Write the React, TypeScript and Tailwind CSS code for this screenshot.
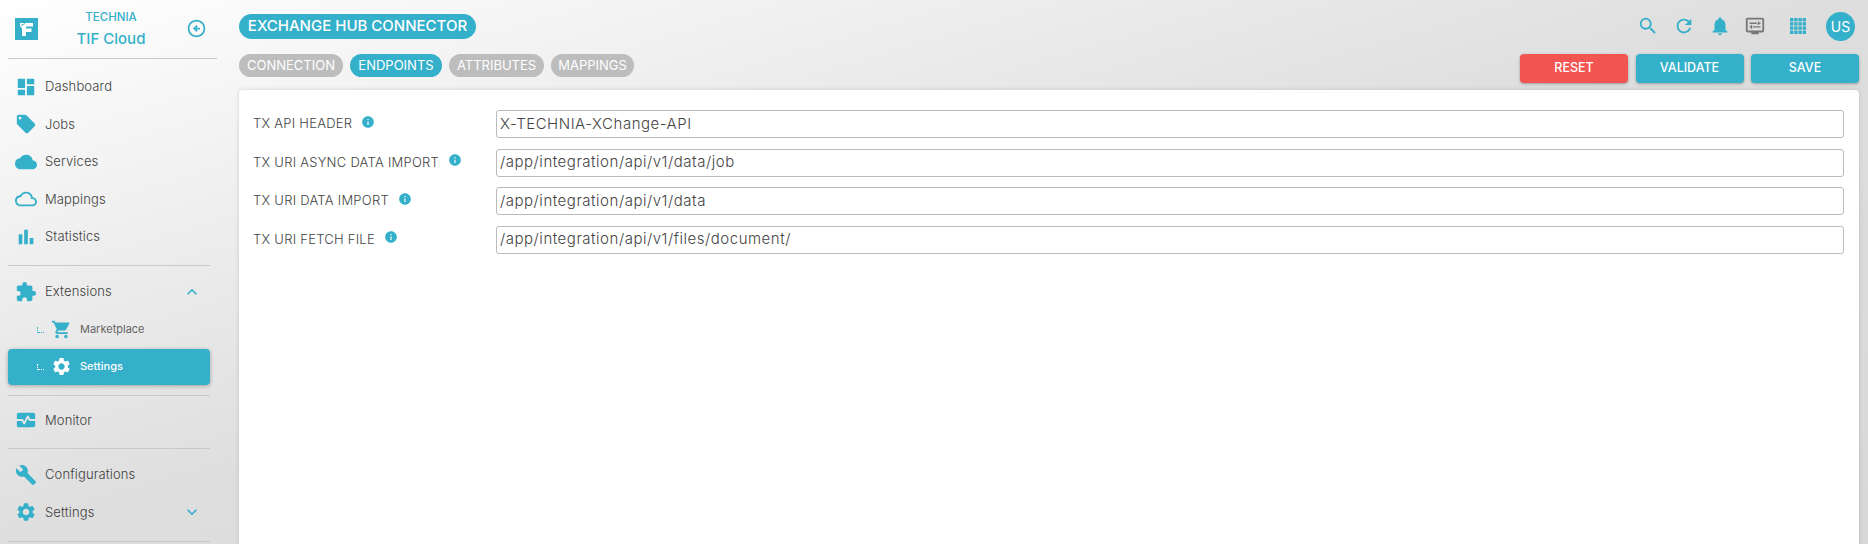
import React from 'react';
import {
  MdDashboard, MdLocalOffer, MdCloud, MdCloudQueue, MdBarChart, MdExtension, MdExpandLess, MdExpandMore,
  MdShoppingCart, MdSettings, MdMonitorHeart, MdBuild, MdSearch, MdRefresh, MdNotifications,
  MdOutlineDisplaySettings, MdInfo, MdOutlineArrowCircleLeft,
} from 'react-icons/md';

const font = "font-['Inter',sans-serif]";

const Logo = () => (
  <svg width="23" height="22" viewBox="0 0 23 22">
    <rect width="23" height="22" fill="#35b0ca" />
    <path d="M5 5h13v3.5h-7v2h5.5v3.5H11V18H7v-7.5L5 8z" fill="#fff" />
    <path d="M6 7.5l4-2" stroke="#35b0ca" strokeWidth="1" />
  </svg>
);

const Dots = ({ active }: { active?: boolean }) => (
  <div className={`flex flex-col justify-end h-[6px] w-[7px] border-l border-dotted ${active ? 'border-white' : 'border-[#35b0ca]'}`}>
    <div className={`w-[6px] border-b border-dotted ${active ? 'border-white' : 'border-[#35b0ca]'}`} />
  </div>
);

const NavItem = ({ icon, label, right }: { icon: React.ReactNode; label: string; right?: React.ReactNode }) => (
  <div className="flex items-center h-[37.5px] pl-[3px] pr-[17px] text-[13px] font-light tracking-[0.01em] text-[#404040]">
    <span className="w-[30px] flex justify-center text-[#35b0ca] text-[22px] shrink-0">{icon}</span>
    <span className="ml-[4px] flex-1">{label}</span>
    {right}
  </div>
);

const Sidebar = () => (
  <aside className="w-[210px] ml-[8px] shrink-0">
    <div className="relative h-[59px] w-[209px] border-b border-[#c9c9c9] flex items-center justify-center">
      <span className="absolute left-[7px] top-[18px]"><Logo /></span>
      <div className="text-center text-[#35b0ca] font-medium mr-[3px] mt-[1px]">
        <div className="text-[11.5px] leading-[13px]">TECHNIA</div>
        <div className="text-[15px] leading-[18px] mt-[6px]">TIF Cloud</div>
      </div>
      <MdOutlineArrowCircleLeft className="absolute left-[178px] top-[18px] text-[#35b0ca] text-[21px]" />
    </div>
    <div className="pt-[9px] h-[207px] border-b border-[#c9c9c9] w-[202px]">
      <NavItem icon={<MdDashboard />} label="Dashboard" />
      <NavItem icon={<MdLocalOffer />} label="Jobs" />
      <NavItem icon={<MdCloud />} label="Services" />
      <NavItem icon={<MdCloudQueue />} label="Mappings" />
      <NavItem icon={<MdBarChart />} label="Statistics" />
    </div>
    <div className="w-[202px] pt-[7px]">
      <NavItem icon={<MdExtension />} label="Extensions" right={<MdExpandLess className="text-[#35b0ca] text-[20px] -mr-[9px]" />} />
      <div className="flex items-center h-[38px] pl-[29px] text-[11px] text-[#666]">
        <Dots />
        <MdShoppingCart className="ml-[7px] text-[#35b0ca] text-[21px]" />
        <span className="ml-[8px]">Marketplace</span>
      </div>
      <div className="flex items-center h-[36px] pl-[29px] text-[11px] text-white bg-[#35b0ca] rounded shadow-[0_1px_4px_rgba(0,0,0,0.3)]">
        <Dots active />
        <MdSettings className="ml-[7px] text-white text-[21px]" />
        <span className="ml-[8px] font-medium">Settings</span>
      </div>
    </div>
    <div className="w-[202px] mt-[10px] border-t border-[#c9c9c9] pt-[6px] pb-[9px]">
      <NavItem icon={<MdMonitorHeart />} label="Monitor" />
    </div>
    <div className="w-[202px] border-t border-[#c9c9c9] pt-[7px] pb-[10px] border-b">
      <NavItem icon={<MdBuild />} label="Configurations" />
      <NavItem icon={<MdSettings />} label="Settings" right={<MdExpandMore className="text-[#35b0ca] text-[20px] -mr-[9px]" />} />
    </div>
  </aside>
);

const fields = [
  { label: 'TX API HEADER', value: 'X-TECHNIA-XChange-API' },
  { label: 'TX URI ASYNC DATA IMPORT', value: '/app/integration/api/v1/data/job' },
  { label: 'TX URI DATA IMPORT', value: '/app/integration/api/v1/data' },
  { label: 'TX URI FETCH FILE', value: '/app/integration/api/v1/files/document/' },
];

const tabs = [
  { label: 'CONNECTION', width: 'w-[104px]', bg: 'bg-[#bdbdbd]' },
  { label: 'ENDPOINTS', width: 'w-[92px]', bg: 'bg-[#35b0ca]' },
  { label: 'ATTRIBUTES', width: 'w-[95px]', bg: 'bg-[#bdbdbd]' },
  { label: 'MAPPINGS', width: 'w-[83px]', bg: 'bg-[#bdbdbd]' },
];

const buttons = [
  { label: 'RESET', bg: 'bg-[#f25451]' },
  { label: 'VALIDATE', bg: 'bg-[#35b0ca]' },
  { label: 'SAVE', bg: 'bg-[#35b0ca]' },
];

export default function App() {
  return (
    <div className={`${font} flex h-[544px] w-[1868px] overflow-hidden bg-gradient-to-br from-white via-[#dedede] to-[#d8d8d8]`}>
      <Sidebar />
      <main className="flex-1 ml-[21px] mr-[9px] flex flex-col min-w-0">
        <div className="flex items-center justify-between h-[51px] pt-[1px]">
          <div className="h-[25px] rounded-full bg-[#35b0ca] text-white text-[15px] font-medium flex items-center w-[237px] justify-center whitespace-nowrap">
            EXCHANGE HUB CONNECTOR
          </div>
          <div className="flex items-center text-[#35b0ca]">
            <MdSearch className="text-[22px]" />
            <MdRefresh className="text-[22px] ml-[14px]" />
            <MdNotifications className="text-[22px] ml-[14px]" />
            <MdOutlineDisplaySettings className="text-[22px] ml-[13px] text-[#777]" />
            <svg width="16" height="16" viewBox="0 0 16 16" className="ml-[24px]" fill="#35b0ca">
              {[0, 4.2, 8.4, 12.6].flatMap((y) =>
                [0, 4.2, 8.4, 12.6].map((x) => <rect key={`${x}-${y}`} x={x} y={y} width="3.4" height="3.4" />)
              )}
            </svg>
            <div className="ml-[20px] mr-[4px] w-[29px] h-[29px] rounded-full bg-[#35b0ca] text-white text-[14px] flex items-center justify-center">US</div>
          </div>
        </div>
        <div className="flex justify-between h-[39px] pt-[3px]">
          <div className="flex gap-[7px]">
            {tabs.map((t) => (
              <div key={t.label} className={`${t.width} ${t.bg} h-[23px] rounded-full text-white text-[13px] flex items-center justify-center whitespace-nowrap`}>
                {t.label}
              </div>
            ))}
          </div>
          <div className="flex gap-[7.5px]">
            {buttons.map((b) => (
              <div key={b.label} className={`${b.bg} w-[108px] h-[29px] rounded text-white text-[12.5px] font-medium flex items-center justify-center shadow-[0_1px_3px_rgba(0,0,0,0.3)]`}>
                {b.label}
              </div>
            ))}
          </div>
        </div>
        <div className="flex-1 bg-white rounded-t shadow-[0_0_4px_rgba(0,0,0,0.15)] pt-[20px] pl-[14px] pr-[15px]">
          <div className="flex flex-col gap-[10.5px]">
            {fields.map((f) => (
              <div key={f.label} className="flex items-center">
                <div className="w-[243px] shrink-0 flex items-center text-[13px] font-light tracking-[0.02em] text-[#444]">
                  <span>{f.label}</span>
                  <MdInfo className="ml-[9px] -mt-[5px] text-[#35b0ca] text-[14px]" />
                </div>
                <div className="flex-1 h-[28px] border border-[#bbb] rounded-[3px] px-[3px] flex items-center text-[15px] font-light tracking-[0.035em] text-[#444]">
                  {f.value}
                </div>
              </div>
            ))}
          </div>
        </div>
      </main>
    </div>
  );
}
